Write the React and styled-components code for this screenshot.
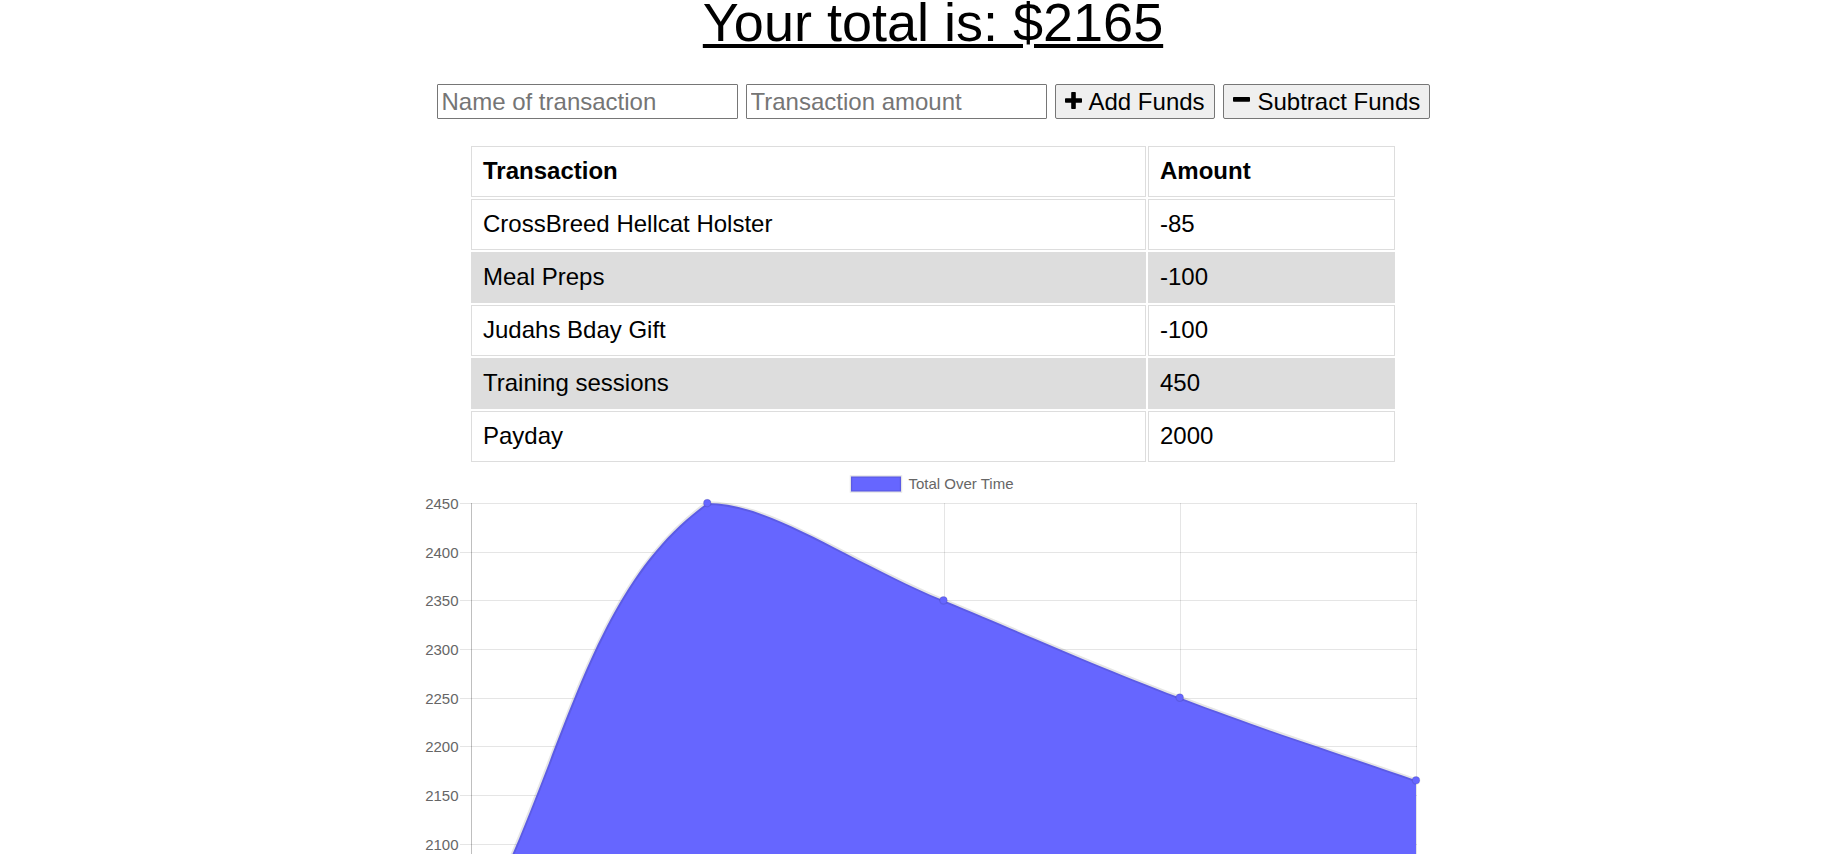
import React from 'react';
import styled, { createGlobalStyle, css } from 'styled-components';

const GlobalStyle = createGlobalStyle`
  html { scrollbar-width: none; }
  html::-webkit-scrollbar { display: none; }
  body {
    margin: 0;
    background: #ffffff;
    color: #000000;
    font-family: "Liberation Sans", Arial, sans-serif;
  }
`;

const Page = styled.main`
  display: flex;
  flex-direction: column;
  align-items: center;
  padding-left: 37px;
`;

const Title = styled.h1`
  margin: 0 0 39px;
  font-size: 54px;
  font-weight: 400;
  line-height: 45px;
  text-decoration: underline;
  text-decoration-thickness: 4px;
  text-underline-offset: 3px;
`;

const Form = styled.div`
  display: flex;
  gap: 8px;
  margin-bottom: 25px;
`;

const Field = styled.input`
  width: 301px;
  height: 35px;
  box-sizing: border-box;
  border: 1px solid #767676;
  border-radius: 1px;
  padding: 0 4px;
  font: 24px "Liberation Sans", Arial, sans-serif;
  color: #000;
  background: #fff;
  &::placeholder {
    color: #757575;
  }
`;

const Button = styled.button`
  display: inline-flex;
  align-items: center;
  width: ${(p) => p.$w}px;
  height: 35px;
  box-sizing: border-box;
  padding: 0 8px 0 9px;
  border: 1px solid #767676;
  border-radius: 2px;
  background: #efefef;
  color: #000;
  font: 24px "Liberation Sans", Arial, sans-serif;
  white-space: nowrap;
  cursor: pointer;
`;

const IconSvg = styled.svg`
  flex: none;
  display: block;
  margin-right: ${(p) => p.$gap}px;
  margin-bottom: ${(p) => p.$lift}px;
`;

const PlusIcon = () => (
  <IconSvg width="17" height="17" viewBox="0 0 17 17" $gap={7} $lift={3}>
    <rect x="6.2" y="0" width="4.6" height="17" rx="0.8" fill="#000" />
    <rect x="0" y="6.2" width="17" height="4.6" rx="0.8" fill="#000" />
  </IconSvg>
);

const MinusIcon = () => (
  <IconSvg width="17" height="5" viewBox="0 0 17 5" $gap={8} $lift={4}>
    <rect x="0" y="0" width="17" height="4.8" rx="0.8" fill="#000" />
  </IconSvg>
);

const Table = styled.table`
  width: 928px;
  border-collapse: separate;
  border-spacing: 2px;
  table-layout: fixed;
  font-size: 24px;
`;

const cellBase = css`
  border: 1px solid #dddddd;
  padding: 9px 11px 11px;
  line-height: 29px;
  text-align: left;
  width: ${(p) => (p.$w ? `${p.$w}px` : 'auto')};
`;

const HeadCell = styled.th`
  ${cellBase};
  font-weight: 700;
  background: #fff;
`;

const Cell = styled.td`
  ${cellBase};
  font-weight: 400;
`;

const Row = styled.tr`
  background: ${(p) => (p.$shade ? '#dddddd' : '#ffffff')};
`;

const ChartBox = styled.div`
  width: 1040px;
  height: 500px;
  flex: none;
`;

const ChartSvg = styled.svg`
  display: block;
`;

const AxisText = styled.text`
  font-family: "Liberation Sans", Arial, sans-serif;
  font-size: 15px;
  fill: #666666;
`;

const transactions = [
  { name: 'CrossBreed Hellcat Holster', amount: -85 },
  { name: 'Meal Preps', amount: -100 },
  { name: 'Judahs Bday Gift', amount: -100 },
  { name: 'Training sessions', amount: 450 },
  { name: 'Payday', amount: 2000 },
];

const series = [2000, 2450, 2350, 2250, 2165];
const area = { left: 58, right: 1003, top: 39 };
const unit = 48.65 / 50;
const yOf = (v) => area.top + (2450 - v) * unit;
const bottom = yOf(2000);
const xStep = (area.right - area.left) / (series.length - 1);
const points = series.map((v, i) => ({ x: area.left + i * xStep, y: yOf(v) }));

const cap = (p) => ({
  x: Math.min(Math.max(p.x, area.left), area.right),
  y: Math.min(Math.max(p.y, area.top), bottom),
});

const ctrl = points.map((cur, i) => {
  const prev = points[i - 1] || cur;
  const next = points[i + 1] || cur;
  const d01 = Math.hypot(cur.x - prev.x, cur.y - prev.y);
  const d12 = Math.hypot(next.x - cur.x, next.y - cur.y);
  let s01 = d01 / (d01 + d12);
  let s12 = d12 / (d01 + d12);
  if (Number.isNaN(s01)) s01 = 0;
  if (Number.isNaN(s12)) s12 = 0;
  const fa = 0.4 * s01;
  const fb = 0.4 * s12;
  return {
    prev: cap({ x: cur.x - fa * (next.x - prev.x), y: cur.y - fa * (next.y - prev.y) }),
    next: cap({ x: cur.x + fb * (next.x - prev.x), y: cur.y + fb * (next.y - prev.y) }),
  };
});

let linePath = `M ${points[0].x} ${points[0].y}`;
for (let i = 1; i < points.length; i += 1) {
  const a = ctrl[i - 1].next;
  const b = ctrl[i].prev;
  const p = points[i];
  linePath += ` C ${a.x} ${a.y} ${b.x} ${b.y} ${p.x} ${p.y}`;
}
const fillPath = `${linePath} L ${area.right} ${bottom} L ${area.left} ${bottom} Z`;

const ticks = [];
for (let v = 2450; v >= 2000; v -= 50) ticks.push(v);

const Chart = () => (
  <ChartBox>
    <ChartSvg width="1040" height="500" viewBox="0 0 1040 500">
      {ticks.map((v) => {
        const y = Math.round(yOf(v)) + 0.5;
        return (
          <g key={v}>
            <line x1={47} x2={1004} y1={y} y2={y} stroke="rgba(0,0,0,0.1)" strokeWidth="1" />
            <AxisText x={45.5} y={y + 5} textAnchor="end">
              {v}
            </AxisText>
          </g>
        );
      })}
      {points.map((p, i) => {
        const x = Math.round(p.x) + 0.5;
        return (
          <line
            key={i}
            x1={x}
            x2={x}
            y1={area.top}
            y2={bottom + 12.5}
            stroke={i === 0 ? 'rgba(0,0,0,0.25)' : 'rgba(0,0,0,0.1)'}
            strokeWidth="1"
          />
        );
      })}
      <path d={fillPath} fill="#6666ff" />
      <path d={linePath} fill="none" stroke="rgba(0,0,0,0.1)" strokeWidth="3.75" />
      {points.map((p, i) => (
        <circle key={i} cx={p.x} cy={p.y} r="3.75" fill="#6666ff" stroke="rgba(0,0,0,0.1)" strokeWidth="1.25" />
      ))}
      <rect x="438" y="12.5" width="50" height="15" fill="#6666ff" stroke="rgba(0,0,0,0.1)" strokeWidth="2.5" />
      <AxisText x="495.5" y="25.4">Total Over Time</AxisText>
    </ChartSvg>
  </ChartBox>
);

export default function App() {
  return (
    <>
      <GlobalStyle />
      <Page>
        <Title>Your total is: $2165</Title>
        <Form>
          <Field type="text" placeholder="Name of transaction" />
          <Field type="number" placeholder="Transaction amount" />
          <Button $w={160}>
            <PlusIcon />
            Add Funds
          </Button>
          <Button $w={207}>
            <MinusIcon />
            Subtract Funds
          </Button>
        </Form>
        <Table>
          <thead>
            <Row>
              <HeadCell $w={651}>Transaction</HeadCell>
              <HeadCell $w={223}>Amount</HeadCell>
            </Row>
          </thead>
          <tbody>
            {transactions.map((t, i) => (
              <Row key={t.name} $shade={i % 2 === 1}>
                <Cell>{t.name}</Cell>
                <Cell>{t.amount}</Cell>
              </Row>
            ))}
          </tbody>
        </Table>
        <Chart />
      </Page>
    </>
  );
}
